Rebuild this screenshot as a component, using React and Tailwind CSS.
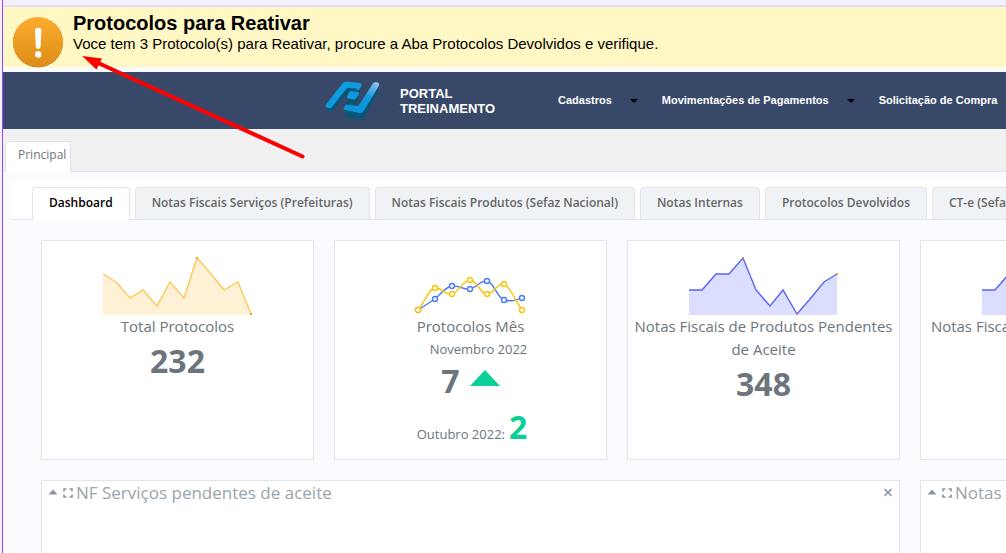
import React from 'react';

const navItems = [
  { label: 'Cadastros', hasMenu: true },
  { label: 'Movimentações de Pagamentos', hasMenu: true },
  { label: 'Solicitação de Compra', hasMenu: false },
];

const tabs = [
  'Dashboard',
  'Notas Fiscais Serviços (Prefeituras)',
  'Notas Fiscais Produtos (Sefaz Nacional)',
  'Notas Internas',
  'Protocolos Devolvidos',
  'CT-e (Sefaz Nacional)',
];

const WarningIcon = () => (
  <svg className="h-[51px] w-[50px] shrink-0" viewBox="0 0 50 51" aria-hidden="true">
    <defs>
      <linearGradient id="warning" x1="0" y1="0" x2="0" y2="1">
        <stop offset="0" stopColor="#fbac30" />
        <stop offset="1" stopColor="#de8c16" />
      </linearGradient>
    </defs>
    <circle cx="25" cy="25.500" r="25" fill="#c17c1a" />
    <circle cx="25" cy="25" r="25" fill="url(#warning)" />
    <path d="M22 14a3.200 3.200 0 0 1 6.400 0l-.8 15.500a2.400 2.400 0 0 1-4.800 0z" fill="#fff" />
    <circle cx="25.200" cy="37.500" r="3.200" fill="#fff" />
  </svg>
);

const Logo = () => (
  <svg className="h-[44px] w-[58px] shrink-0" viewBox="0 0 58 44" aria-hidden="true">
    <defs>
      <linearGradient id="blade" gradientUnits="userSpaceOnUse" x1="55" y1="4" x2="40" y2="26">
        <stop offset="0" stopColor="#8cc4ec" />
        <stop offset="0.600" stopColor="#1a9ade" />
        <stop offset="1" stopColor="#0a98dc" />
      </linearGradient>
    </defs>
    <g fill="#0a5478" stroke="#0a5478" strokeLinejoin="round">
      <path d="M6 32L23 11L37 13" fill="none" strokeWidth="6" />
      <path d="M53 10L38 37L22 34" fill="none" strokeWidth="7" />
      <path d="M27 18L35 19L32 25L24 24z" strokeWidth="2" />
    </g>
    <path
      d="M2.500 26L19.500 4.500Q21 2.500 23 2.500L37 4Q39.500 4.500 38.500 7L35 12L33.500 9.500L24 9L8.500 28.500Q7.500 29.500 5.500 29L3.500 28.500Q1.500 27.500 2.500 26z"
      fill="#0d9ade"
    />
    <path
      d="M49.500 5Q50.500 3 53 3L55 3.500Q57 4.500 56 6.500L41 31.500Q39.500 34.500 36.500 34L22 31Q20 30.500 21 28.500L23 25.500L33 27Q35.500 27 36.500 25.500z"
      fill="url(#blade)"
    />
    <path
      d="M28 12L35 13Q36.500 13.500 36 15L32.500 20Q32 21 31 20.500L25 19.500Q23.500 19 24 17.500L26.500 13Q27 12 28 12z"
      fill="#0d9ade"
    />
  </svg>
);

// Area sparkline, the dots mark the extremes and the last value
const Sparkline = ({ points, line, fill, dots }) => (
  <svg className="mr-px h-[60px] w-[150px] shrink-0" viewBox="0 0 150 60" aria-hidden="true">
    <polygon points={`1,60 ${points} 149,60`} fill={fill} />
    <polyline points={points} fill="none" stroke={line} strokeWidth="1.4" />
    {dots.map(([x, y]) => (
      <circle key={x} cx={x} cy={y} r="1" fill="#f08000" />
    ))}
  </svg>
);

const blueDots = [[4, 48], [21, 37], [38, 24], [56, 27], [73, 19], [90, 38], [108, 36]];
const yellowDots = [[4, 48], [21, 26], [38, 32], [56, 18], [73, 32], [90, 22], [108, 48]];

const LineChart = () => (
  <svg className="h-[60px] w-[114px] shrink-0" viewBox="0 0 114 60" aria-hidden="true">
    <g transform="translate(0 7)" fill="none" strokeWidth="1.4">
      <path
        d="M4 48L21 37C28 31 31 25 38 24S49 28 56 27S66 18 73 19S83 36 90 38S102 38 108 36"
        stroke="#4c7cf3"
      />
      {blueDots.map(([x, y]) => (
        <circle key={x} cx={x} cy={y} r="2.500" fill="#fff" stroke="#4c7cf3" />
      ))}
      <path
        d="M4 48C10 42 14 27 21 26S31 34 38 32S49 18 56 18S66 32 73 32S84 20 90 22S102 40 108 48"
        stroke="#fbc30b"
      />
      {yellowDots.map(([x, y]) => (
        <circle key={x} cx={x} cy={y} r="2.500" fill="#fff" stroke="#fbc30b" />
      ))}
    </g>
  </svg>
);

const PendingChart = () => (
  <Sparkline
    points="1,35 14,35 28,19 41,19 55,3 68,35 82,51 95,35 109,59 122,44 136,27 149,19"
    line="#5563fa"
    fill="#dbdefe"
    dots={[[55, 3], [109, 59], [149, 19]]}
  />
);

const StatCard = ({ chart, title, children }) => (
  <section className="flex h-[220px] flex-col items-center border border-[#dee5ed] bg-white px-1 pt-[14px] text-center">
    {chart}
    <h2 className="text-[15px] leading-[23px]">{title}</h2>
    {children}
  </section>
);

const StatValue = ({ children }) => (
  <p className="text-[32px] leading-[46px] font-bold">{children}</p>
);

const Panel = ({ title, className }) => (
  <section className={`border border-[#dee5ed] bg-white ${className}`}>
    <header className="flex h-6 items-center px-[6px] text-[#8795aa]">
      <button type="button" aria-label="Recolher" className="mr-[5px]">
        <svg className="h-[10px] w-[10px]" viewBox="0 0 10 10">
          <path d="M.5 6.500L5 1.500L9.500 6.500z" fill="currentColor" />
        </svg>
      </button>
      <button type="button" aria-label="Expandir" className="mr-[3px]">
        <svg className="h-[10px] w-[10px]" viewBox="0 0 10 10">
          <path
            d="M1 3.500V1h2.500M6.500 1H9v2.500M9 6.500V9H6.500M3.500 9H1V6.500"
            fill="none"
            stroke="currentColor"
            strokeWidth="1.600"
          />
        </svg>
      </button>
      <h2 className="flex-1 text-[17px] leading-6 whitespace-nowrap text-[#98a4ae]">{title}</h2>
      <button type="button" aria-label="Fechar">
        <svg className="h-[10px] w-[10px]" viewBox="0 0 10 10">
          <path d="M1.500 1L8.500 8M8.500 1L1.500 8" fill="none" stroke="currentColor" strokeWidth="1.500" />
        </svg>
      </button>
    </header>
  </section>
);

const Pointer = () => (
  <svg
    className="pointer-events-none absolute top-[52px] left-[80px] h-[110px] w-[230px]"
    viewBox="0 0 230 110"
    aria-hidden="true"
  >
    <path d="M16 10L222.500 104.500" stroke="#fe0000" strokeWidth="4" strokeLinecap="round" />
    <path d="M2 4L22 6.500L16.500 17.500z" fill="#fe0000" />
  </svg>
);

const App = () => {
  return (
    <div className="relative flex min-h-screen overflow-hidden bg-[#f2f0fa] font-['Open_Sans','Noto_Sans',sans-serif] text-[#6c757d]">
      <div className="ml-[2px] flex min-w-0 flex-1 flex-col border-l border-[#9747ff] bg-[#fafbff]">
        <div className="h-[7px] shrink-0 border-b-2 border-[#e2dcf7] bg-[#f2f0fa]" />

        {/* Alert */}
        <div
          role="alert"
          className="flex h-[60px] items-start bg-[#fff8c5] pl-[10px] font-['Liberation_Sans',Arial,sans-serif] text-black"
        >
          <div className="pt-[10px]">
            <WarningIcon />
          </div>
          <div className="pt-1 pl-[10px] whitespace-nowrap">
            <h1 className="text-[20px] leading-6 font-bold">Protocolos para Reativar</h1>
            <p className="text-[15px] leading-[18px]">
              Voce tem 3 Protocolo(s) para Reativar, procure a Aba Protocolos Devolvidos e verifique.
            </p>
          </div>
        </div>

        {/* Navbar */}
        <header className="mt-[5px] flex h-[57px] shrink-0 items-center bg-[#384869] pl-[320px] font-['Liberation_Sans',Arial,sans-serif] font-bold text-white">
          <Logo />
          <div className="ml-[19px] w-[158px] shrink-0 text-[13px] leading-[15px]">
            PORTAL
            <br />
            TREINAMENTO
          </div>
          <nav className="flex text-[11px] whitespace-nowrap">
            {navItems.map((item) => (
              <a key={item.label} href="#" className="flex items-center">
                {item.label}
                {item.hasMenu && (
                  <svg className="mr-6 ml-[18px] h-1 w-2" viewBox="0 0 8 4" aria-hidden="true">
                    <path d="M0 0H8L4 4z" fill="#000" />
                  </svg>
                )}
              </a>
            ))}
          </nav>
        </header>

        <div className="flex h-[43px] shrink-0 items-end border-b border-[#dee5ed] bg-[#f1f1f1] pl-[2px]">
          <a
            href="#"
            className="-mb-px h-[31px] border border-b-0 border-[#dee2ed] bg-white pr-1 pl-3 text-[12px] leading-[26px]"
          >
            Principal
          </a>
        </div>

        {/* Tabs */}
        <div
          role="tablist"
          className="mt-2 ml-2 flex h-10 shrink-0 items-end gap-[5px] border-b border-[#dee5ed] bg-white pl-[21px]"
        >
          {tabs.map((tab, index) => (
            <button
              key={tab}
              type="button"
              role="tab"
              aria-selected={index === 0}
              className={`shrink-0 rounded-t border border-[#dee5ed] px-4 text-[12px] font-semibold whitespace-nowrap ${
                index === 0
                  ? '-mb-px h-[33px] border-b-0 bg-white pb-[2px] text-black'
                  : 'h-8 border-b-0 bg-[#eff3f6] pb-px text-[#666]'
              }`}
            >
              {tab}
            </button>
          ))}
        </div>

        {/* Dashboard */}
        <main className="grid flex-1 grid-cols-[repeat(4,273px)] grid-rows-[220px_1fr] gap-5 pt-5 pl-[38px]">
          <StatCard
            title="Total Protocolos"
            chart={
              <Sparkline
                points="1,19 14,27 28,43 41,35 55,51 68,27 82,43 95,3 109,19 122,35 136,27 149,59"
                line="#fdc95c"
                fill="#fff1d6"
                dots={[[95, 3], [149, 59]]}
              />
            }
          >
            <StatValue>232</StatValue>
          </StatCard>

          <StatCard title="Protocolos Mês" chart={<LineChart />}>
            <p className="pl-4 text-[13px] leading-[22px]">Novembro 2022</p>
            <p className="flex items-center text-[32px] leading-[42px] font-bold">
              7
              <svg className="mb-[6px] ml-[10px] h-4 w-[30px]" viewBox="0 0 30 16" role="img" aria-label="Em alta">
                <path d="M0 16L15 0L30 16z" fill="#0acf97" />
              </svg>
            </p>
            <p className="mt-1 flex items-baseline gap-1 pl-[3px] text-[13px] leading-[42px]">
              Outubro 2022: <strong className="text-[32px] text-[#0acf97]">2</strong>
            </p>
          </StatCard>

          <StatCard title="Notas Fiscais de Produtos Pendentes de Aceite" chart={<PendingChart />}>
            <StatValue>348</StatValue>
          </StatCard>

          <StatCard title="Notas Fiscais de Serviços Pendentes de Aceite" chart={<PendingChart />}>
            <StatValue>12</StatValue>
          </StatCard>

          <Panel title="NF Serviços pendentes de aceite" className="col-span-3 border-b-0" />
          <Panel title="Notas Internas" className="border-b-0" />
        </main>
      </div>

      <Pointer />
    </div>
  );
};

export default App;
